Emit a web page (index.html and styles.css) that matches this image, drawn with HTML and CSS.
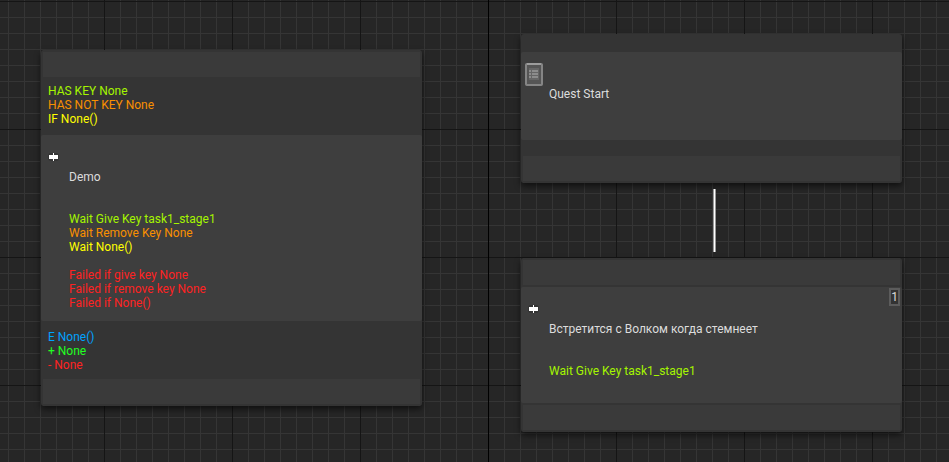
FILE: index.html
```html
<!DOCTYPE html>
<html lang="ru">
<head>
<meta charset="utf-8">
<title>Quest graph</title>
<link rel="stylesheet" href="styles.css">
</head>
<body>
<main class="canvas">
  <section class="node node-demo">
    <div class="pin"></div>
    <div class="band conditions">
      <p class="lime">HAS KEY None</p>
      <p class="orange">HAS NOT KEY None</p>
      <p class="yellow">IF None()</p>
    </div>
    <div class="body">
      <svg class="arrow" viewBox="0 0 13 12" aria-hidden="true"><rect class="halo" x="1" y="2" width="11" height="8" rx="3"/><path d="M2 4H6V2H7V4H11V8H7V10H6V8H2Z"/></svg>
      <div class="text">
        <h2>Demo</h2>
        <div class="group">
          <p class="lime">Wait Give Key task1_stage1</p>
          <p class="orange">Wait Remove Key None</p>
          <p class="yellow">Wait None()</p>
        </div>
        <div class="failures red">
          <p>Failed if give key None</p>
          <p>Failed if remove key None</p>
          <p>Failed if None()</p>
        </div>
      </div>
    </div>
    <div class="band results">
      <p class="blue">E None()</p>
      <p class="green">+ None</p>
      <p class="red">- None</p>
    </div>
    <div class="pin"></div>
  </section>

  <section class="node node-start">
    <div class="strip"></div>
    <div class="body body-start">
      <svg class="list" viewBox="0 0 20 24" aria-hidden="true"><rect class="glow" x="1" y="1" width="18" height="23" rx="3"/><rect class="sheet" x="2" y="2" width="16" height="21" rx="1"/><path class="edge" d="M3 2H17"/><rect class="inset" x="5" y="6" width="10" height="12"/><path class="rows" d="M5 9H7M5 12H7M5 15H7M8 9H14M8 12H14M8 15H14"/></svg>
      <div class="text"><h2>Quest Start</h2></div>
    </div>
    <div class="strip strip-low"></div>
    <div class="pin"></div>
  </section>

  <svg class="wire" viewBox="0 0 3 63" aria-hidden="true"><rect class="soft" width="3" height="63"/><rect class="core" x="1" width="1" height="63"/></svg>

  <section class="node node-meet">
    <div class="pin"></div>
    <div class="body body-meet">
      <svg class="arrow" viewBox="0 0 13 12" aria-hidden="true"><rect class="halo" x="1" y="2" width="11" height="8" rx="3"/><path d="M2 4H6V2H7V4H11V8H7V10H6V8H2Z"/></svg>
      <div class="text">
        <h2>Встретится с Волком когда стемнеет</h2>
        <div class="group"><p class="lime">Wait Give Key task1_stage1</p></div>
      </div>
      <span class="badge">1</span>
    </div>
    <div class="pin"></div>
  </section>
</main>
</body>
</html>
```

FILE: styles.css
```css
* { box-sizing: border-box; }
body { margin: 0; background: #262626; }
p, h2 { margin: 0; font: inherit; }

.canvas {
  position: relative;
  min-height: 100vh;
  overflow: hidden;
  font: 12px/14px Roboto, "Noto Sans", sans-serif;
  color: #dcdcdc;
  background-color: #262626;
  background-image:
    linear-gradient(90deg, #000 1px, transparent 1px),
    linear-gradient(90deg, #151515 1px, transparent 1px),
    linear-gradient(#151515 1px, transparent 1px),
    linear-gradient(90deg, #353535 1px, transparent 1px),
    linear-gradient(#353535 1px, transparent 1px);
  background-size: 1024px 100%, 128px 100%, 100% 128px, 16px 100%, 100% 16px;
  background-position: 488px 0, 104px 0, 0 1px, 8px 0, 0 1px;
}

.node {
  position: absolute;
  width: 381px;
  background: #343434;
  border-radius: 3px;
  box-shadow: 0 3px 6px rgba(0, 0, 0, 0.6);
}
.node-demo { left: 41px; top: 50px; }
.node-start { left: 521px; top: 34px; }
.node-meet { left: 521px; top: 258px; }

.pin { height: 25px; margin: 2px; background: #3a3a3a; }
.node > .pin:first-child { margin-top: 0; border-top: 2px solid #343434; height: 27px; }
.node > .pin:last-child { margin-bottom: 0; border-bottom: 2px solid #343434; height: 27px; }
.node-demo > .pin:first-child { margin-bottom: 0; }
.node-demo > .pin:last-child,
.node-start > .pin:last-child { margin-top: 0; }

.band { padding: 7px 7px 9px; }
.results { padding: 9px 7px 7px; }
.strip { height: 18px; }
.strip-low { height: 16px; }

.body {
  position: relative;
  display: flex;
  gap: 9px;
  padding: 14px 7px 11px 6px;
  background: #3e3e3e;
  border-radius: 2px;
}
.body-start { gap: 5px; padding: 10px 7px 39px 3px; }
.body-meet { padding-bottom: 25px; }
.arrow { width: 13px; height: 12px; margin-top: 2px; fill: #fff; }
.halo { fill: #343434; }
.list { width: 20px; height: 24px; }
.text { padding-top: 21px; }
.body-start .text { padding-top: 25px; }
.group { margin-top: 28px; }
.failures { margin-top: 14px; }

.glow { fill: #666; }
.sheet { fill: #555; stroke: #858585; stroke-width: 2; }
.edge { stroke: #b4b4b4; stroke-width: 1; }
.inset { fill: #666; }
.rows { stroke: #8c8c8c; stroke-width: 2; }

.badge {
  position: absolute;
  top: 1px;
  right: 2px;
  width: 11px;
  height: 18px;
  border: 2px solid #5c5c5c;
  background: #333;
  text-align: center;
}

.wire { position: absolute; left: 713px; top: 189px; width: 3px; height: 63px; }
.soft { fill: #999; }
.core { fill: #fff; }

.lime { color: #a5f500; }
.orange { color: #f99000; }
.yellow { color: #ff0; }
.red { color: #f22; }
.blue { color: #00a2ff; }
.green { color: #2f2; }
```
